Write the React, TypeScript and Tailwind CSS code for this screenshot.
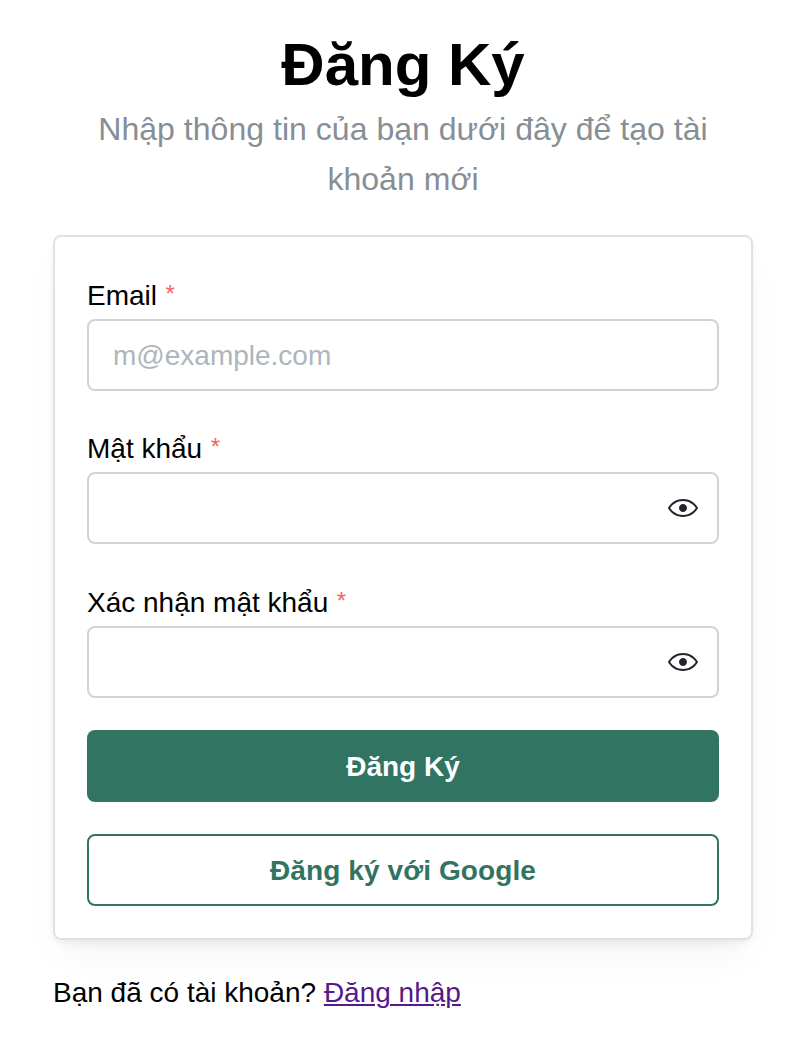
const Eye = () => (
  <svg viewBox="0 0 15 15" className="h-[30px] w-[30px]" fill="none">
    <path d="M7.5 11C4.80285 11 2.52952 9.62184 1.09622 7.50001C2.52952 5.37816 4.80285 4 7.5 4C10.1971 4 12.4705 5.37816 13.9038 7.50001C12.4705 9.62183 10.1971 11 7.5 11ZM7.5 3C4.30786 3 1.65639 4.70638 0.0760002 7.23501C-0.0253338 7.39715 -0.0253334 7.60288 0.0760014 7.76501C1.65639 10.2936 4.30786 12 7.5 12C10.6921 12 13.3436 10.2936 14.924 7.76501C15.0253 7.60288 15.0253 7.39715 14.924 7.23501C13.3436 4.70638 10.6921 3 7.5 3ZM7.5 9.5C8.60457 9.5 9.5 8.60457 9.5 7.5C9.5 6.39543 8.60457 5.5 7.5 5.5C6.39543 5.5 5.5 6.39543 5.5 7.5C5.5 8.60457 6.39543 9.5 7.5 9.5Z" fill="#212529" fillRule="evenodd" clipRule="evenodd" />
  </svg>
);

function Field({ label, placeholder, password }: { label: string; placeholder?: string; password?: boolean }) {
  return (
    <div>
      <label className="flex h-[43px] text-[28px] leading-[39px]">
        {label}<span className="pl-[8.5px] text-[24px] leading-[35px] text-[#f26464]">*</span>
      </label>
      <div className="flex h-[72px] items-center rounded-lg border-2 border-[#ced4da] bg-white pr-[19px] pl-6">
        <input type={password ? "password" : "text"} placeholder={placeholder} className="min-w-0 flex-1 pt-[2px] text-[28px] outline-none placeholder:text-[#adb5bd]" />
        {password && <Eye />}
      </div>
    </div>
  );
}

export default function App() {
  return (
    <main className="min-h-[1044px] bg-white pt-[23px] pr-[59px] pl-[53px] font-['Liberation_Sans',sans-serif] text-black">
      <h1 className="h-[81px] text-center text-[60px] leading-[84px] font-bold">Đăng Ký</h1>
      <p className="h-[101px] text-center text-[32px] leading-[50px] tracking-[0.03px] text-[#868e96]">Nhập thông tin của bạn dưới đây để tạo tài<br />khoản mới</p>
      <section className="mt-[30px] flex h-[705px] flex-col rounded-lg border-2 border-[#dee2e6] px-8 pt-[39px] shadow-[0_2px_6px_rgba(0,0,0,0.05),0_20px_40px_-10px_rgba(0,0,0,0.05),0_14px_14px_-10px_rgba(0,0,0,0.04)]">
        <div className="flex flex-col gap-[38.3px]">
          <Field label="Email" placeholder="m@example.com" />
          <Field label="Mật khẩu" password />
          <Field label="Xác nhận mật khẩu" password />
        </div>
        <button className="mt-8 h-[72px] shrink-0 rounded-lg bg-[#317462] pt-[2px] text-[28px] font-bold text-white">Đăng Ký</button>
        <button className="mt-8 h-[72px] shrink-0 rounded-lg border-2 border-[#317462] pt-[2px] text-[28px] font-bold tracking-[0.1px] text-[#317462]">Đăng ký với Google</button>
      </section>
      <p className="mt-[31px] text-[28px] leading-[43px]">Bạn đã có tài khoản? <a href="#" className="text-[#551a8b] underline decoration-2 underline-offset-2">Đăng nhập</a></p>
    </main>
  );
}
